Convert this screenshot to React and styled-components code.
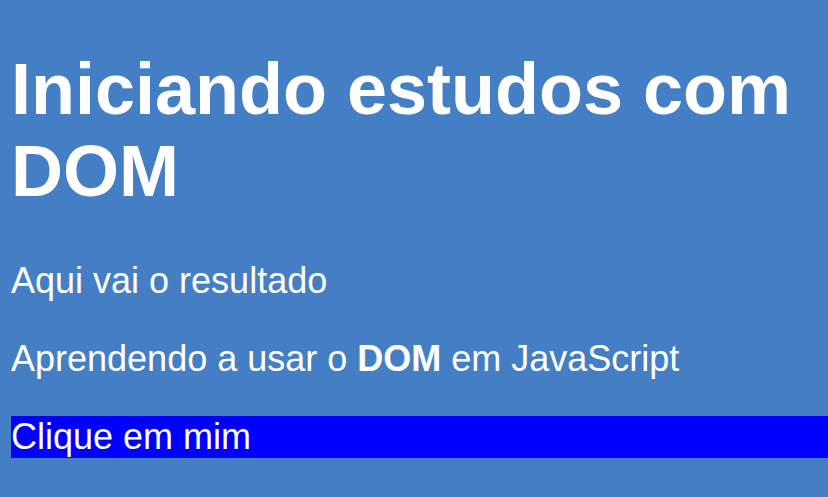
import React from 'react';
import styled, { createGlobalStyle } from 'styled-components';

const GlobalStyle = createGlobalStyle`
  html {
    background-color: #447fc6;
  }

  body {
    margin: 0 0 0 11px;
    font-family: "Liberation Sans", Arial, sans-serif;
    color: white;
    overflow: hidden;
  }
`;

const Page = styled.main`
  display: block;
`;

const Title = styled.h1`
  font-size: 72px;
  font-weight: bold;
  line-height: normal;
  margin: 0.67em 0;
`;

const Text = styled.p`
  font-size: 36px;
  line-height: normal;
  margin: 1em 0;
`;

const ClickBox = styled.div`
  font-size: 36px;
  line-height: normal;
  background-color: #0000ff;
  margin-right: -11px;
  cursor: pointer;
`;

function App() {
  return (
    <Page>
      <GlobalStyle />
      <Title>Iniciando estudos com DOM</Title>
      <Text>Aqui vai o resultado</Text>
      <Text>
        Aprendendo a usar o <strong>DOM</strong> em JavaScript
      </Text>
      <ClickBox>Clique em mim</ClickBox>
    </Page>
  );
}

export default App;
